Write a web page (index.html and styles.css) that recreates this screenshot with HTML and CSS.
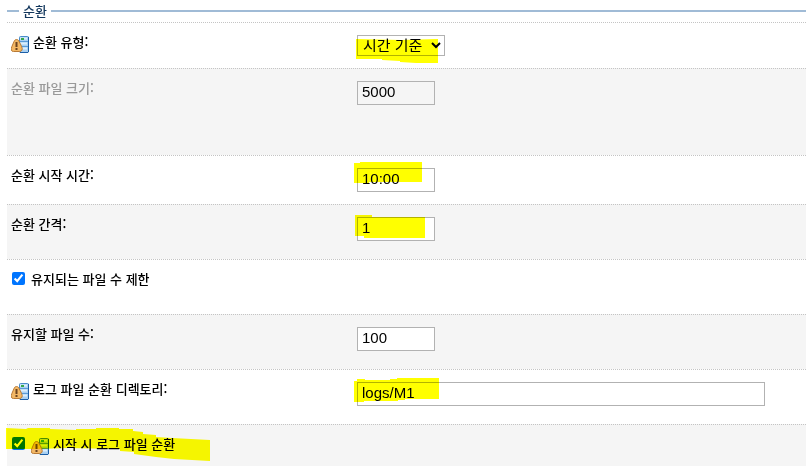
FILE: index.html
```
<!DOCTYPE html>
<html lang="ko">
<head>
    <meta charset="utf-8">
    <title>순환</title>
    <link rel="stylesheet" href="styles.css">
</head>
<body>
    <svg class="defs" aria-hidden="true">
        <!-- server with a restart warning -->
        <symbol id="restart" viewBox="0 0 18 17">
            <rect x="8.5" y="0.5" width="9" height="16" rx="1" fill="#a9d0f2" stroke="#4a8cca"/>
            <path d="M17.500 1v15M9 16.500h8" stroke="#1c5ea6"/>
            <path d="M9 5.500h8M9 10.500h8" stroke="#5a9ad6"/>
            <path d="M9 2.500h7M9 7.500h7M9 12.500h7" stroke="#dceefc" stroke-width="2"/>
            <rect x="10" y="2" width="3" height="2" fill="#37a84a"/>
            <path d="M5.500 3.500c1.400 0 2.200.9 2.800 2.300l2.400 4.900c1.200 2.700.3 4.800-2.200 4.800h-6c-2.500 0-2.700-2.100-1.700-4.800l2.100-4.900c.6-1.400 1.200-2.300 2.600-2.300z" fill="#f2b765" stroke="#b87a36"/>
            <path d="M5.500 6v5M5.500 12v2" stroke="#6b431f" stroke-width="2"/>
        </symbol>
    </svg>

    <form class="rotation">
        <h2 class="section-title">순환</h2>

        <div class="row short">
            <label class="name" for="type"><svg class="icon"><use href="#restart"/></svg>순환 유형:</label>
            <div class="field">
                <select id="type">
                    <option>시간 기준</option>
                </select>
                <svg class="marker low" width="86" height="28"><path d="M0 0L45 1L82 0V24L60 24L44 23V22L26 21V20H0z"/></svg>
            </div>
        </div>

        <div class="row tall shaded">
            <label class="name disabled" for="size">순환 파일 크기:</label>
            <div class="field"><input type="text" id="size" value="5000" disabled></div>
        </div>

        <div class="row medium">
            <label class="name" for="start">순환 시작 시간:</label>
            <div class="field">
                <input type="text" id="start" value="10:00">
                <svg class="marker" width="84" height="28"><path d="M0 1H6V0H68V20H15V21H0z"/></svg>
            </div>
        </div>

        <div class="row shaded">
            <label class="name" for="interval">순환 간격:</label>
            <div class="field">
                <input type="text" id="interval" value="1">
                <svg class="marker" width="84" height="28"><path d="M1 4H18V6H71V27H10V25H1z"/></svg>
            </div>
        </div>

        <div class="row">
            <div class="check">
                <input type="checkbox" id="limit" checked>
                <label for="limit">유지되는 파일 수 제한</label>
            </div>
        </div>

        <div class="row shaded">
            <label class="name" for="count">유지할 파일 수:</label>
            <div class="field"><input type="text" id="count" value="100"></div>
        </div>

        <div class="row">
            <label class="name" for="dir"><svg class="icon"><use href="#restart"/></svg>로그 파일 순환 디렉토리:</label>
            <div class="field">
                <input type="text" id="dir" class="wide" value="logs/M1">
                <svg class="marker" width="86" height="28"><path d="M0 5H3V3H11V4H36V3H43V2H85V23H51V24H44V25H10V26H0z"/></svg>
            </div>
        </div>

        <div class="row last shaded">
            <div class="check">
                <input type="checkbox" id="onstart" checked>
                <label for="onstart"><svg class="icon"><use href="#restart"/></svg>시작 시 로그 파일 순환</label>
                <svg class="marker long" width="206" height="38"><path d="M0 4L20 5L22 4H44V5L70 6V5H90V4H113V5H127V7L137 8V10L150 11V13L166 14L204 16V37L168 35L150 33L128 30V28L114 27V25L62 24L32 25H0z"/></svg>
            </div>
        </div>
    </form>
</body>
</html>
```
FILE: styles.css
```
body {
    margin: 0;
    padding-left: 7px;
    background-color: #fff;
    color: #000;
    font-family: "Noto Sans CJK KR", sans-serif;
    font-size: 13px;
    font-weight: 500;
    line-height: 14px;
}

.defs {
    display: none;
}

.section-title {
    display: flex;
    align-items: center;
    gap: 4px;
    height: 22px;
    margin: 0;
    color: #12365c;
    font-size: 13px;
    font-weight: 500;
}

.section-title::before,
.section-title::after {
    content: "";
    height: 2px;
    background-color: #a0bbd6;
}

.section-title::before {
    width: 12px;
}

.section-title::after {
    flex: 1;
}

.row {
    display: grid;
    grid-template-columns: 346px 1fr;
    align-items: start;
    box-sizing: border-box;
    min-height: 55px;
    padding: 12px 4px 0;
    border-top: 1px dotted #c4c4c4;
}

.row.short {
    min-height: 46px;
}

.row.medium {
    min-height: 49px;
}

.row.tall {
    min-height: 87px;
}

.row.last {
    min-height: 42px;
}

.shaded {
    background-color: #f5f5f5;
}

.name,
.check label {
    display: flex;
    gap: 4px;
}

.disabled {
    color: #999;
}

.icon {
    width: 18px;
    height: 17px;
    margin-top: 1px;
}

.field,
.check {
    position: relative;
}

.check {
    display: flex;
    gap: 5px;
}

.check input {
    width: 13px;
    height: 13px;
    margin: 0 1px;
    accent-color: #0075ff;
}

input[type="text"],
select {
    display: block;
    box-sizing: border-box;
    border: 1px solid #b2b2b2;
    border-radius: 0;
    background-color: #fff;
    color: #000;
    font-family: "Liberation Sans", "Noto Sans CJK KR", sans-serif;
    font-size: 15px;
}

input[type="text"] {
    width: 78px;
    height: 24px;
    padding: 0 4px 3px;
}

input[type="text"]:disabled {
    background-color: #f5f5f5;
}

input.wide {
    width: 408px;
    max-width: 100%;
}

select {
    width: 88px;
    height: 21px;
    padding: 0 0 3px 1px;
}

/* highlighter strokes */
.marker {
    position: absolute;
    top: -6px;
    left: -3px;
    fill: #ff0;
    mix-blend-mode: multiply;
    pointer-events: none;
}

.marker.low {
    top: 4px;
    left: -1px;
}

.marker.long {
    top: -13px;
    left: -5px;
}
```
